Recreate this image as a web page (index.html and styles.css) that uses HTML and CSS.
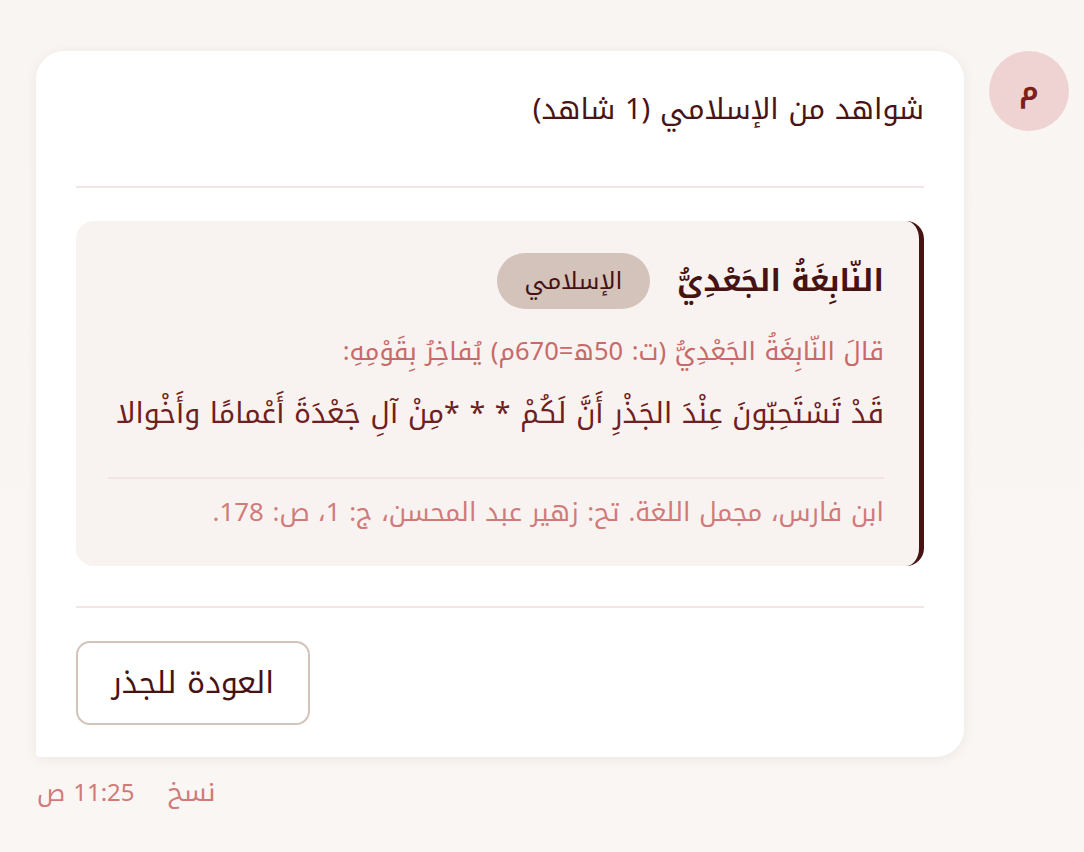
FILE: index.html
```html
<!DOCTYPE html>
<html lang="ar" dir="rtl">
<head>
<meta charset="utf-8">
<link rel="stylesheet" href="styles.css">
</head>
<body>
<div class="row">
  <div class="avatar">م</div>
  <div class="col">
    <div class="bubble">
      <div class="title">شواهد من الإسلامي (1 شاهد)</div>
      <div class="divider top"></div>
      <div class="poet">
        <div class="poet-head">
          <span class="poet-name">النّابِغَةُ الجَعْدِيُّ</span>
          <span class="badge">الإسلامي</span>
        </div>
        <div class="intro">قالَ النّابِغَةُ الجَعْدِيُّ (ت: 50ه=670م) يُفاخِرُ بِقَوْمِهِ:</div>
        <div class="verse">قَدْ تَسْتَحِبّونَ عِنْدَ الجَذْرِ أَنَّ لَكُمْ * * *مِنْ آلِ جَعْدَةَ أَعْمامًا وأَخْوالا</div>
        <div class="inner-divider"></div>
        <div class="source">ابن فارس، مجمل اللغة. تح: زهير عبد المحسن، ج: 1، ص: 178.</div>
      </div>
      <div class="divider bottom"></div>
      <button class="back">العودة للجذر</button>
    </div>
    <div class="meta">
      <span class="copy">نسخ</span>
      <span class="time">11:25 ص</span>
    </div>
  </div>
</div>
</body>
</html>
```

FILE: styles.css
```css
html, body {
  margin: 0;
  padding: 0;
}
body {
  background: linear-gradient(#f8f5f2, #faf6f3);
  min-height: 852px;
  font-family: "Noto Kufi Arabic", "Noto Sans", sans-serif;
  color: #4a1414;
}
.row {
  display: flex;
  flex-direction: row;
  align-items: flex-start;
  gap: 25px;
  padding: 51px 15px 0 0;
}
.avatar {
  width: 80px;
  height: 80px;
  border-radius: 50%;
  background: #efd3d3;
  color: #7b1f1f;
  font-weight: 700;
  font-size: 27px;
  line-height: 1;
  display: flex;
  align-items: center;
  justify-content: center;
  flex: none;
}
.col {
  width: 928px;
}
.bubble {
  background: #ffffff;
  border-radius: 28px 28px 28px 4px;
  box-shadow: 0 2px 12px rgba(120, 60, 40, 0.08);
  padding: 35px 40px 32px 40px;
}
.title {
  font-size: 29px;
  line-height: 48px;
  height: 48px;
  color: #4a1414;
}
.divider {
  height: 2px;
  background: #f5e4e6;
}
.divider.top {
  margin: 52px 0 33px;
}
.divider.bottom {
  margin: 40px 0 33px;
}
.poet {
  background: #f8f3f0;
  border-radius: 18px;
  border-right: 5px solid #461212;
  padding: 32px 35px 35px 32px;
}
.poet-head {
  display: flex;
  align-items: center;
  gap: 27px;
  height: 56px;
}
.poet-name {
  font-size: 30px;
  font-weight: 700;
  line-height: 56px;
  color: #461212;
}
.badge {
  background: #d3c3bb;
  color: #461212;
  font-size: 24px;
  border-radius: 28px;
  width: 153px;
  height: 56px;
  line-height: 56px;
  text-align: center;
}
.intro {
  margin-top: 25px;
  font-size: 25.5px;
  line-height: 36px;
  height: 36px;
  color: #c86a6a;
  white-space: nowrap;
}
.verse {
  margin-top: 22px;
  font-size: 28.5px;
  line-height: 44px;
  height: 44px;
  color: #6e2020;
  white-space: nowrap;
}
.inner-divider {
  height: 2px;
  background: #f4e3e3;
  margin: 41px 0 16px;
}
.source {
  font-size: 25.8px;
  line-height: 36px;
  height: 36px;
  color: #d07a7a;
  white-space: nowrap;
}
.back {
  display: block;
  font-family: inherit;
  font-size: 30.5px;
  line-height: 1;
  color: #461212;
  background: #ffffff;
  border: 2px solid #d3c3bb;
  border-radius: 14px;
  width: 234px;
  height: 84px;
  margin-right: auto;
  margin-left: 0;
  padding: 0;
}
.meta {
  display: flex;
  justify-content: flex-end;
  gap: 33px;
  padding-top: 18px;
  padding-left: 1px;
  font-size: 24px;
  line-height: 36px;
  color: #d07a7a;
}
.copy {
  font-size: 26px;
}
```
